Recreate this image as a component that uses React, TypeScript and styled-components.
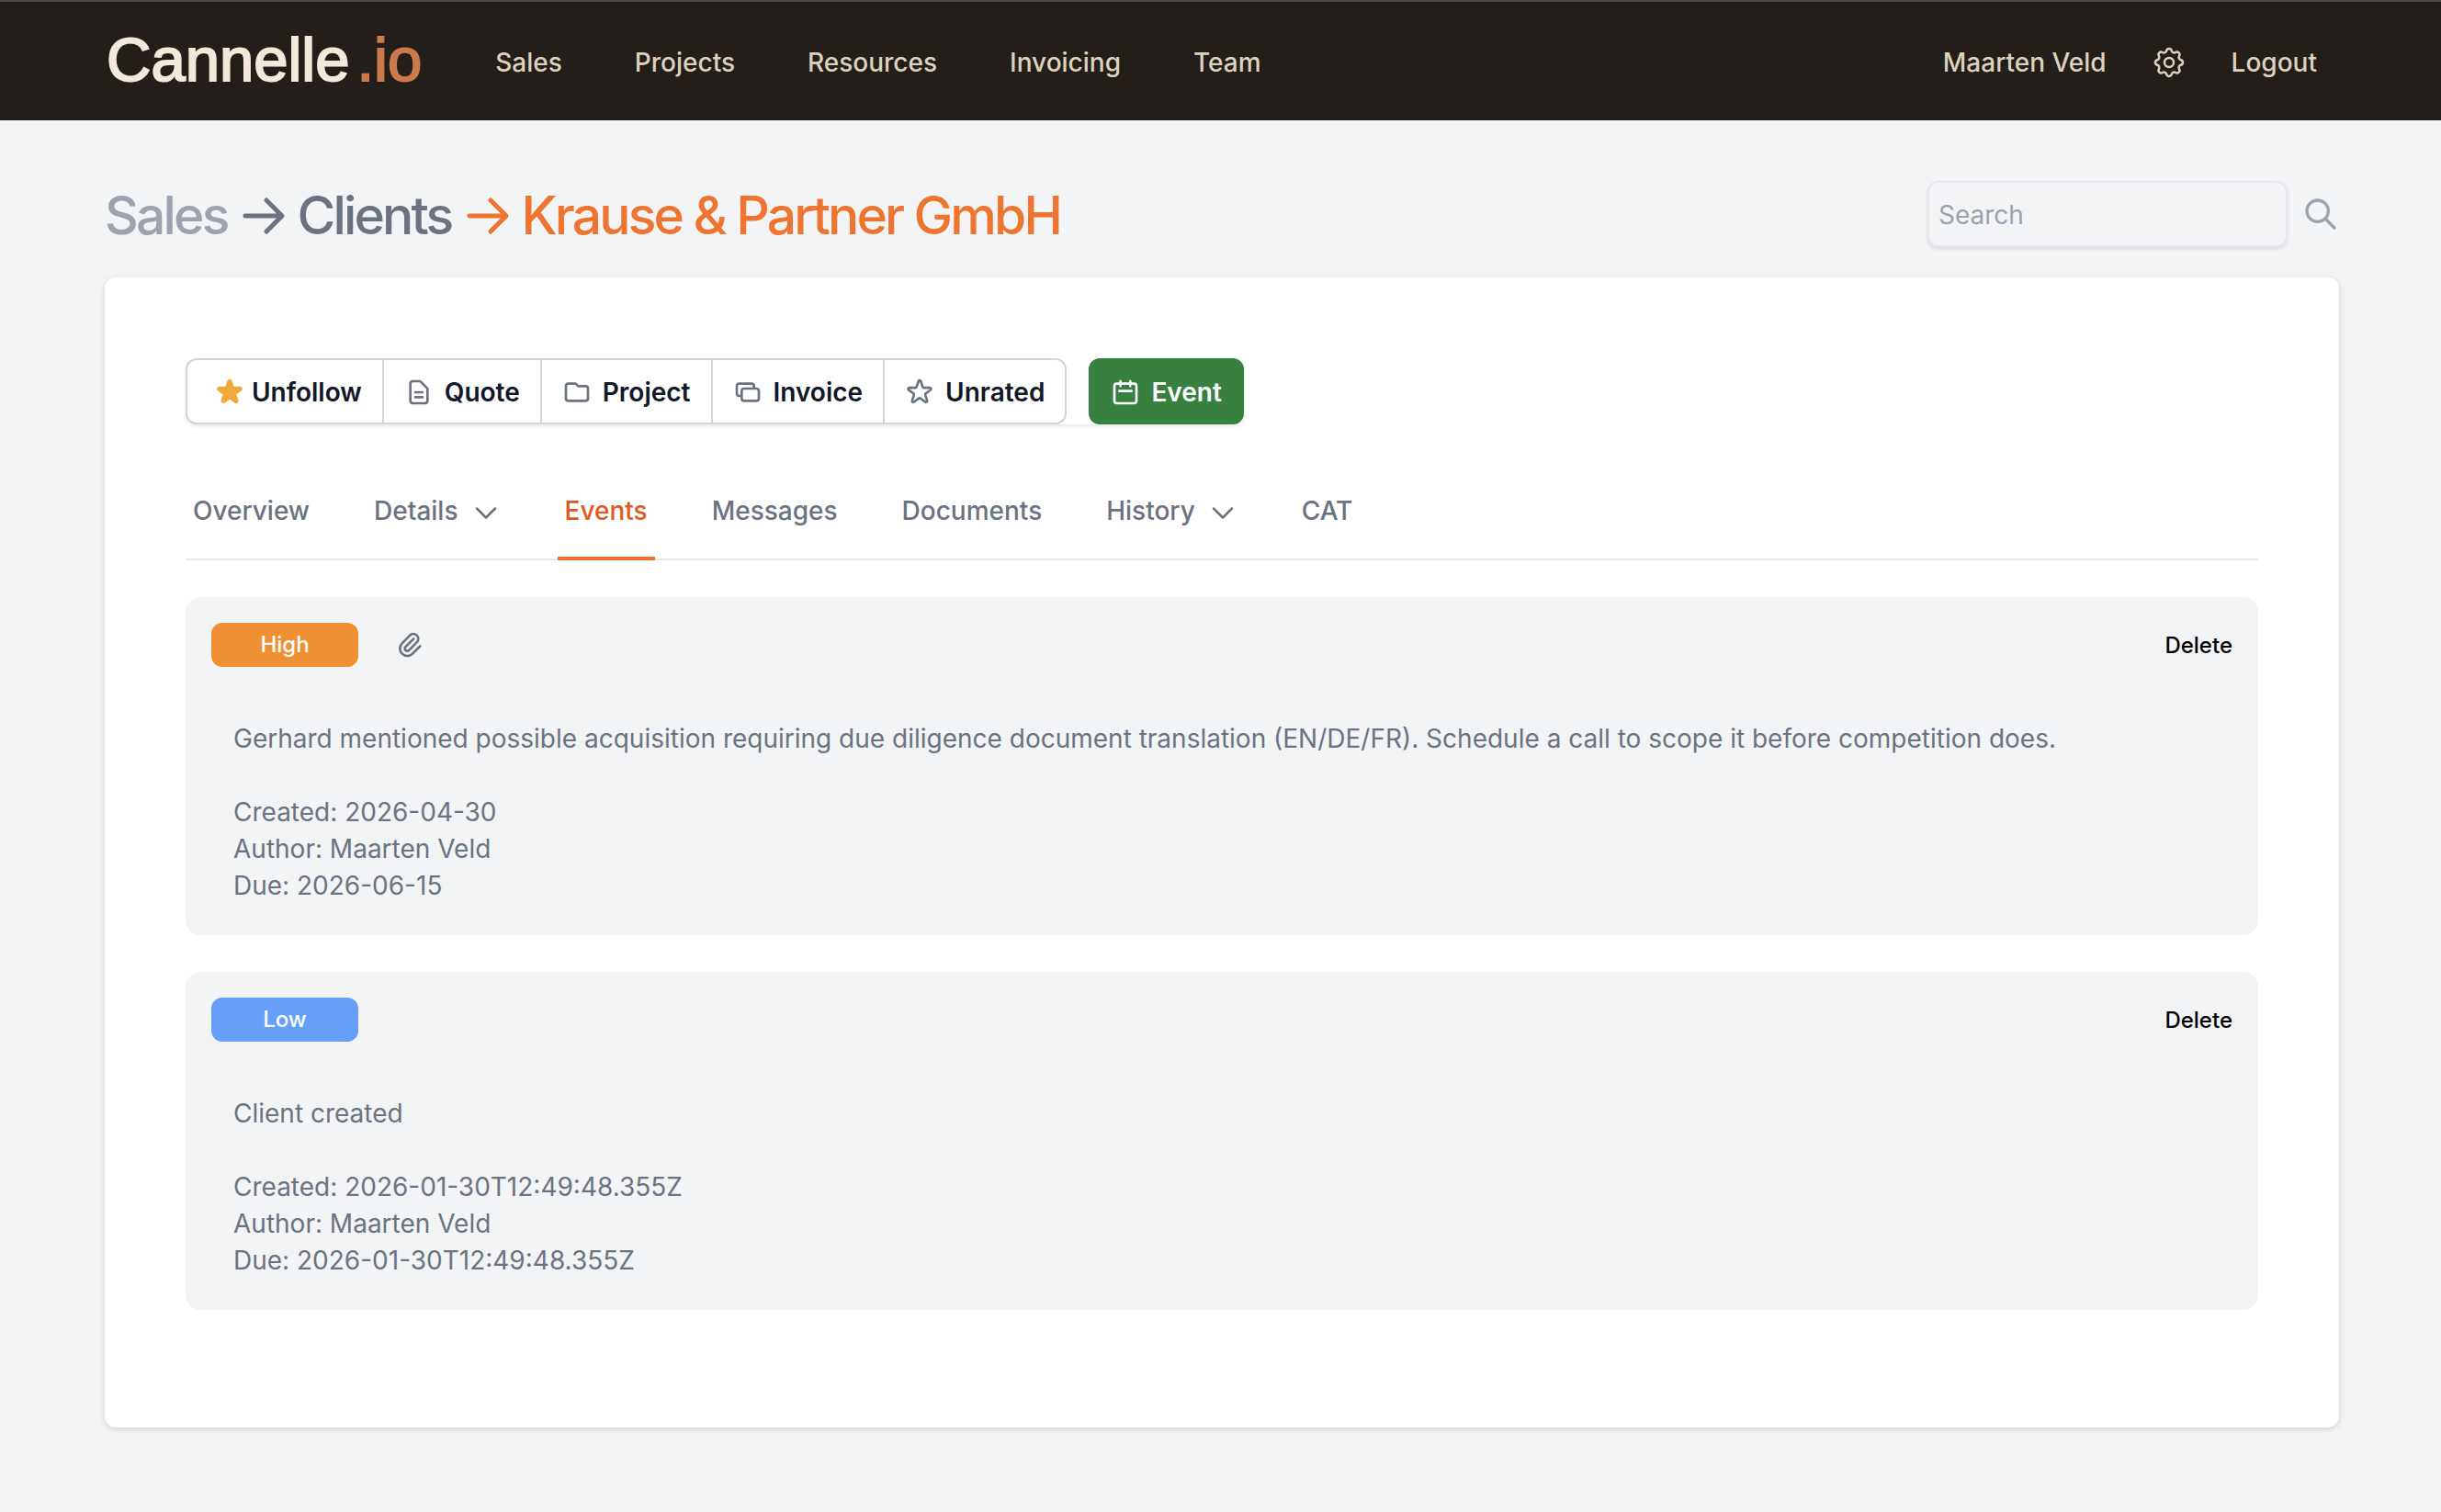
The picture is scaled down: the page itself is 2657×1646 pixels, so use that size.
import React from "react";
import styled, { createGlobalStyle } from "styled-components";
import {
  HiOutlineCalendar,
  HiOutlineCog,
  HiOutlineDocumentText,
  HiOutlineFolder,
  HiOutlinePaperClip,
  HiOutlineSearch,
  HiOutlineStar,
} from "react-icons/hi";

const Global = createGlobalStyle`
  *, *::before, *::after { box-sizing: border-box; }
  body { margin: 0; background: #f3f4f6; font-family: Inter, "Liberation Sans", sans-serif; color: #6b7280; }
  button, input { font: inherit; margin: 0; }
  button { cursor: pointer; }
  a { color: inherit; text-decoration: none; }
`;

const Header = styled.header`
  display: flex;
  align-items: center;
  gap: 80px;
  height: 131px;
  padding: 2px 135px 0 116px;
  background: #231e1a;
  border-top: 2px solid #4a4a4a;
  color: #ddd2bd;
  font-size: 28px;
  font-weight: 500;
  line-height: 40px;
`;
const Logo = styled.a`
  padding-bottom: 6px;
  font: 400 67px/64px "Liberation Sans", Arial, sans-serif;
  color: #f2e9da;
  -webkit-text-stroke: 2px currentColor;
  span {
    margin-left: 8px;
    color: #cc7a4b;
  }
`;
const Nav = styled.nav`
  display: flex;
  align-items: center;
  gap: 79px;
`;
const UserNav = styled(Nav)`
  margin-left: auto;
  gap: 48px;
`;
const IconLink = styled.a`
  display: flex;
  svg { width: 40px; height: 40px; }
  path { stroke-width: 1.5; }
`;

const Main = styled.main`
  padding: 0 111px 92px 114px;
`;
const TitleRow = styled.div`
  display: flex;
  align-items: center;
  justify-content: space-between;
  padding: 66px 0 33px;
`;
const Crumbs = styled.h1`
  display: flex;
  align-items: center;
  gap: 16px;
  margin: 0;
  padding-top: 4px;
  font-size: 57px;
  line-height: 68px;
  font-weight: 500;
  letter-spacing: -0.05em;
`;
const Crumb = styled.a<{ $color: string }>`
  display: flex;
  align-items: center;
  gap: 12px;
  color: ${(p) => p.$color};
  svg { width: 48px; height: 44px; }
`;
const Search = styled.form`
  display: flex;
  align-items: center;
  gap: 16px;
`;
const SearchInput = styled.input`
  width: 392px;
  height: 72px;
  padding: 2px 10px 0;
  border: 2px solid #e5e7eb;
  border-radius: 12px;
  background: transparent;
  box-shadow: 0 2px 4px rgba(0, 0, 0, 0.12);
  font-size: 28px;
  &::placeholder { color: #9ca3af; }
`;
const SearchButton = styled.button`
  display: flex;
  padding: 0;
  border: 0;
  background: none;
  color: #9ca3af;
  svg { width: 40px; height: 40px; }
`;

const Card = styled.section`
  padding: 88px 88px 128px;
  border-radius: 12px;
  background: #fff;
  box-shadow: 0 2px 6px rgba(0, 0, 0, 0.15);
`;
const Toolbar = styled.div`
  display: flex;
  gap: 24px;
  width: fit-content;
  border-radius: 12px;
  box-shadow: 0 2px 4px rgba(0, 0, 0, 0.1);
`;
const Group = styled.div`
  display: flex;
  border: 2px solid #d1d5db;
  border-radius: 12px;
`;
const Action = styled.button<{ $followed?: boolean }>`
  display: flex;
  align-items: center;
  gap: ${(p) => (p.$followed ? 8 : 12)}px;
  height: 68px;
  padding: 2px 22px 0;
  padding-left: ${(p) => (p.$followed ? 30 : 22)}px;
  border: 0;
  background: none;
  color: #111827;
  font-size: 28px;
  font-weight: 600;
  & + & { border-left: 2px solid #d1d5db; }
  svg {
    width: 32px;
    height: 32px;
    color: ${(p) => (p.$followed ? "#f2a93b" : "#6b7280")};
    fill: ${(p) => (p.$followed ? "#f2a93b" : "none")};
  }
`;
const Primary = styled.button`
  display: flex;
  align-items: center;
  gap: 12px;
  height: 72px;
  padding: 2px 24px 0;
  border: 0;
  border-radius: 12px;
  background: #38803f;
  color: #fff;
  font-size: 28px;
  font-weight: 600;
  svg { width: 32px; height: 32px; }
`;

const Tabs = styled.nav`
  display: flex;
  gap: 54px;
  margin: 64px 0 40px;
  box-shadow: inset 0 -2px #e5e7eb;
`;
const Tab = styled.a<{ $active?: boolean }>`
  display: flex;
  align-items: center;
  gap: 14px;
  padding: 10px 8px 30px;
  border-bottom: 4px solid ${(p) => (p.$active ? "#ee742f" : "transparent")};
  color: ${(p) => (p.$active ? "#e25822" : "#6b7280")};
  font-size: 28px;
  line-height: 40px;
  font-weight: 500;
  svg { width: 32px; height: 32px; }
`;

const EventList = styled.div`
  display: flex;
  flex-direction: column;
  gap: 40px;
`;
const EventCard = styled.article`
  padding: 28px 28px 34px;
  border-radius: 16px;
  background: #f3f4f6;
`;
const EventHead = styled.div`
  display: flex;
  align-items: center;
  gap: 40px;
  height: 48px;
`;
const Badge = styled.span<{ $color: string }>`
  width: 160px;
  border-radius: 12px;
  background: ${(p) => p.$color};
  color: #fff;
  font-size: 24px;
  line-height: 48px;
  font-weight: 500;
  text-align: center;
`;
const ClipButton = styled.button`
  display: flex;
  padding: 0;
  border: 0;
  background: none;
  color: #6b7280;
  svg { width: 32px; height: 32px; }
`;
const DeleteButton = styled.button`
  margin-left: auto;
  padding: 0;
  border: 0;
  background: none;
  color: #000;
  font-size: 24px;
  font-weight: 500;
`;
const EventBody = styled.div`
  padding: 58px 24px 0;
  font-size: 28px;
  line-height: 40px;
  p { margin: 0 0 40px; }
`;

const Arrow = () => (
  <svg viewBox="0 0 48 44" fill="none" stroke="currentColor" strokeWidth="5" strokeLinecap="round" strokeLinejoin="round" aria-hidden="true">
    <path d="M4 22H43M27 5L44 22L27 39" />
  </svg>
);
const Chevron = () => (
  <svg viewBox="0 0 32 32" fill="none" stroke="currentColor" strokeWidth="2.5" strokeLinecap="round" strokeLinejoin="round" aria-hidden="true">
    <path d="M6 13.5L16 23.5L26 13.5" />
  </svg>
);
const Invoices = () => (
  <svg viewBox="0 0 24 24" fill="none" stroke="currentColor" strokeWidth="2" strokeLinecap="round" strokeLinejoin="round" aria-hidden="true">
    <path d="M17 9V7a2 2 0 0 0-2-2H5a2 2 0 0 0-2 2v6a2 2 0 0 0 2 2h2m2 4h10a2 2 0 0 0 2-2v-6a2 2 0 0 0-2-2H9a2 2 0 0 0-2 2v6a2 2 0 0 0 2 2z" />
  </svg>
);

const navItems = ["Sales", "Projects", "Resources", "Invoicing", "Team"];
const tabs = [
  { label: "Overview" },
  { label: "Details", menu: true },
  { label: "Events", active: true },
  { label: "Messages" },
  { label: "Documents" },
  { label: "History", menu: true },
  { label: "CAT" },
];
const events = [
  {
    level: "High",
    color: "#f09035",
    clip: true,
    text: "Gerhard mentioned possible acquisition requiring due diligence document translation (EN/DE/FR). Schedule a call to scope it before competition does.",
    created: "2026-04-30",
    due: "2026-06-15",
  },
  {
    level: "Low",
    color: "#669ff9",
    clip: false,
    text: "Client created",
    created: "2026-01-30T12:49:48.355Z",
    due: "2026-01-30T12:49:48.355Z",
  },
];

export default function App() {
  return (
    <>
      <Global />
      <Header>
        <Logo href="#">Cannelle<span>.io</span></Logo>
        <Nav>{navItems.map((n) => <a key={n} href="#">{n}</a>)}</Nav>
        <UserNav>
          <a href="#">Maarten Veld</a>
          <IconLink href="#" aria-label="Settings"><HiOutlineCog /></IconLink>
          <a href="#">Logout</a>
        </UserNav>
      </Header>
      <Main>
        <TitleRow>
          <Crumbs>
            <Crumb href="#" $color="#9ca3af">Sales</Crumb>
            <Crumb href="#" $color="#6b7280"><Arrow />Clients</Crumb>
            <Crumb href="#" $color="#ee742f"><Arrow />Krause &amp; Partner GmbH</Crumb>
          </Crumbs>
          <Search>
            <SearchInput type="text" placeholder="Search" aria-label="Search" />
            <SearchButton type="button" aria-label="Run search"><HiOutlineSearch /></SearchButton>
          </Search>
        </TitleRow>
        <Card>
          <Toolbar>
            <Group>
              <Action $followed><HiOutlineStar />Unfollow</Action>
              <Action><HiOutlineDocumentText />Quote</Action>
              <Action><HiOutlineFolder />Project</Action>
              <Action><Invoices />Invoice</Action>
              <Action><HiOutlineStar />Unrated</Action>
            </Group>
            <Primary><HiOutlineCalendar />Event</Primary>
          </Toolbar>
          <Tabs>
            {tabs.map((t) => (
              <Tab key={t.label} href="#" $active={t.active}>{t.label}{t.menu && <Chevron />}</Tab>
            ))}
          </Tabs>
          <EventList>
            {events.map((e) => (
              <EventCard key={e.level}>
                <EventHead>
                  <Badge $color={e.color}>{e.level}</Badge>
                  {e.clip && <ClipButton aria-label="Attachment"><HiOutlinePaperClip /></ClipButton>}
                  <DeleteButton>Delete</DeleteButton>
                </EventHead>
                <EventBody>
                  <p>{e.text}</p>
                  <div>Created: {e.created}</div>
                  <div>Author: Maarten Veld</div>
                  <div>Due: {e.due}</div>
                </EventBody>
              </EventCard>
            ))}
          </EventList>
        </Card>
      </Main>
    </>
  );
}
